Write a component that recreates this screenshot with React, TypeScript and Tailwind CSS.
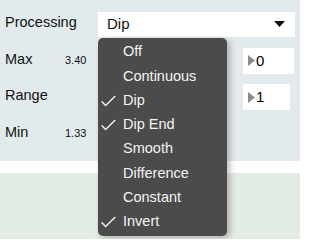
import React from "react";

const options = [
  { label: "Off", checked: false },
  { label: "Continuous", checked: false },
  { label: "Dip", checked: true },
  { label: "Dip End", checked: true },
  { label: "Smooth", checked: false },
  { label: "Difference", checked: false },
  { label: "Constant", checked: false },
  { label: "Invert", checked: true },
];

function Check() {
  return (
    <svg width="15" height="11" viewBox="0 0 15 11" className="absolute left-[3px] top-1/2 -translate-y-1/2">
      <path d="M1 6.2 L4.6 10 L14 0.8" fill="none" stroke="#f2f2f2" strokeWidth="1.4" strokeLinecap="round" strokeLinejoin="round" />
    </svg>
  );
}

function NumberBox({ value, width }: { value: string; width: string }) {
  return (
    <div className={`flex h-[26px] items-center bg-white pl-[5px] ${width}`}>
      <svg width="7" height="11" viewBox="0 0 7 11">
        <path d="M0 0 L7 5.5 L0 11 Z" fill="#8a8a8a" />
      </svg>
      <span className="ml-[1px] text-[15px] text-black">{value}</span>
    </div>
  );
}

export default function App() {
  return (
    <div
      className="relative h-[239px] w-[300px] overflow-hidden bg-[#e3ece3]"
      style={{ fontFamily: '"Liberation Sans", Arial, sans-serif' }}
    >
      <div className="h-[161px] bg-[#e2eaee] pt-[6px] pl-[5px] text-[14.5px] text-[#111]">
        <div className="flex h-[36.5px] items-center">
          <span className="mb-[2px] w-[93px]">Processing</span>
          <div className="flex h-[25px] w-[197px] items-center justify-between bg-white pl-[9px] pr-[10px]">
            <span className="text-[15px]">Dip</span>
            <svg width="11" height="6" viewBox="0 0 11 6">
              <path d="M0 0 L11 0 L5.5 6 Z" fill="#111" />
            </svg>
          </div>
        </div>
        <div className="flex h-[36.5px] items-center">
          <span className="mb-[2px] w-[60px]">Max</span>
          <span className="mb-[2px] text-[11px]">3.40</span>
          <div className="ml-auto mr-[6px]">
            <NumberBox value="0" width="w-[51px]" />
          </div>
        </div>
        <div className="flex h-[36.5px] items-center">
          <span className="mb-[2px] w-[60px]">Range</span>
          <div className="ml-auto mr-[10px]">
            <NumberBox value="1" width="w-[47px]" />
          </div>
        </div>
        <div className="flex h-[36.5px] items-center">
          <span className="mb-[2px] w-[60px]">Min</span>
          <span className="mb-[2px] text-[11px]">1.33</span>
        </div>
      </div>
      <div className="h-[12px] bg-white" />

      <div className="absolute left-[98px] top-[38px] w-[129px] rounded-[5px] bg-[#4b4b4b] py-[2px] shadow-[3px_2px_6px_rgba(0,0,0,0.25)]">
        {options.map((o) => (
          <div key={o.label} className="relative flex h-[24.3px] items-center pl-[25px] text-[14.5px] text-[#f4f4f4]">
            {o.checked && <Check />}
            <span>{o.label}</span>
          </div>
        ))}
      </div>
    </div>
  );
}
